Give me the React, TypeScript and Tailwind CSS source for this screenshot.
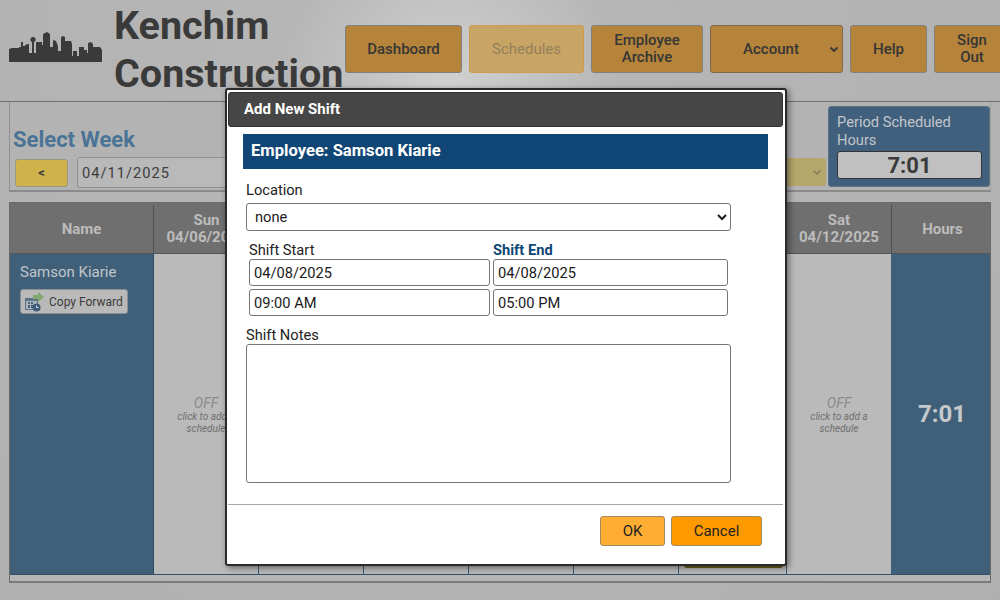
const fontRoboto = "font-['Roboto',sans-serif]";

function Skyline() {
  return (
    <svg width="93" height="30" viewBox="0 0 93 30" fill="#3a3a3a" className="shrink-0">
      <path d="M0 30V17L3 16H10V15H12V10H14V14H16V13L19 12H20V21H23V10H25V21H27V10H33V13H34V2L38 0L41 2V15H44V8L47 9L49 14V19H52V5L54 4L56 5V9H62L63 12V24H64V19H68V24H70V15H75V18H78V21H79V11L82 10L84 12V15H91L93 18V30Z" />
      <circle cx="24" cy="7.5" r="2.6" />
    </svg>
  );
}

function NavButton({ label, width, dim }: { label: string; width: string; dim?: boolean }) {
  return (
    <button
      className={`${width} h-12 shrink-0 rounded-[3px] border px-[14px] text-[15px] leading-[17px] ${
        dim
          ? "border-[#cf9c4e] bg-[#c9a565] font-normal text-[#93805a]"
          : "border-[#808080] bg-[#b5833a] font-medium text-[#363636]"
      }`}
    >
      {label}
    </button>
  );
}

function CopyIcon() {
  return (
    <svg width="20" height="20" viewBox="0 0 20 20" className="shrink-0">
      <rect x="1" y="6" width="13" height="12" fill="#5f7386" />
      <rect x="2" y="9" width="11" height="8" fill="#a9b6c0" />
      <path d="M4 10h2v2H4zM7 10h2v2H7zM4 13h2v3H4zM7 13h2v3H7z" fill="#4c6378" />
      <path d="M9 3h5V0l6 5-6 5V7H9z" fill="#7fa76f" />
      <circle cx="12.5" cy="15.5" r="4" fill="#3f5d78" />
      <path d="M12.5 13.5v2h2" stroke="#d6dde3" strokeWidth="1" fill="none" />
    </svg>
  );
}

function OffCell({ width, border }: { width: string; border: boolean }) {
  return (
    <div className={`${width} shrink-0 flex flex-col items-center justify-center bg-[#bababa] pt-[1px] text-center italic text-[#8a8a8a] ${border ? "border-r border-[#3d5a75]" : ""}`}>
      <span className="text-[14px] leading-[16px]">OFF</span>
      <span className="w-[76px] text-[10px] leading-[12px] text-[#6e6e6e]">click to add a schedule</span>
    </div>
  );
}

const dayCols = [
  { label: "Sun", date: "04/06/2025", width: "w-[105px]" },
  { label: "Mon", date: "04/07/2025", width: "w-[105px]" },
  { label: "Tue", date: "04/08/2025", width: "w-[105px]" },
  { label: "Wed", date: "04/09/2025", width: "w-[105px]" },
  { label: "Thu", date: "04/10/2025", width: "w-[105px]" },
  { label: "Fri", date: "04/11/2025", width: "w-[108px]" },
  { label: "Sat", date: "04/12/2025", width: "w-[104px]" },
];

function ShiftModal() {
  const field = "h-[27px] rounded-[3px] border border-[#767676] bg-white px-1 text-[14.67px] text-[#1a1a1a] outline-none";
  return (
    <div className="absolute left-[225px] top-[88px] flex h-[478px] w-[562px] flex-col rounded-[3px] border-2 border-[#2a2a2a] bg-white pt-[2px] pl-[1px] pr-[2px] shadow-[2px_2px_6px_rgba(0,0,0,0.45)]">
      <div className="flex h-[35px] shrink-0 items-center rounded-[3px] border border-[#333] bg-[#464646] pl-[15px] text-[15px] font-bold text-white">
        Add New Shift
      </div>
      <div className="mx-[15px] mt-[7px] flex h-[35px] w-[525px] shrink-0 items-center bg-[#0f4676] pl-[8px] text-[16.6px] font-bold text-white">
        Employee: Samson Kiarie
      </div>
      <div className="ml-[18px] flex w-[485px] flex-col">
        <label className="mt-[12px] text-[14.67px] leading-[18px] text-[#222]">Location</label>
        <select className="mt-[4px] h-[28px] w-[485px] rounded-[3px] border border-[#767676] bg-white pl-[4px] text-[14.67px] text-[#1a1a1a]" defaultValue="none">
          <option value="none">none</option>
        </select>
        <div className="mt-[10px] ml-[3px] flex gap-[3px]">
          <div className="flex w-[241px] flex-col">
            <label className="text-[14.67px] leading-[18px] text-[#222]">Shift Start</label>
            <input readOnly value="04/08/2025" className={`${field} w-[241px]`} />
            <input readOnly value="09:00 AM" className={`${field} mt-[3px] w-[241px]`} />
          </div>
          <div className="flex w-[235px] flex-col">
            <label className="text-[14.67px] leading-[18px] font-bold text-[#0f4676]">Shift End</label>
            <input readOnly value="04/08/2025" className={`${field} w-[235px]`} />
            <input readOnly value="05:00 PM" className={`${field} mt-[3px] w-[235px]`} />
          </div>
        </div>
        <label className="mt-[10px] text-[14.67px] leading-[18px] text-[#222]">Shift Notes</label>
        <textarea readOnly className="h-[139px] w-[485px] resize-none rounded-[3px] border border-[#767676] bg-white outline-none" />
      </div>
      <div className="mt-[21px] border-t border-[#a8a8a8]" />
      <div className="mt-[11px] flex justify-end gap-[6px] pr-[21px]">
        <button className="h-[30px] w-[65px] rounded-[3px] border border-[#a08a60] bg-[#ffad33] text-[15px] text-[#222]">OK</button>
        <button className="h-[30px] w-[91px] rounded-[3px] border border-[#a08a60] bg-[#ff9900] text-[15px] text-[#222]">Cancel</button>
      </div>
    </div>
  );
}

export default function App() {
  return (
    <div className={`relative h-[600px] w-[1000px] overflow-hidden bg-[#b2b2b2] bg-[radial-gradient(circle_at_450px_85px,#d0d0d0_0,#b6b6b6_170px,#b0b0b0_100%)] ${fontRoboto}`}>
      {/* header */}
      <header className="flex h-[102px] items-start border-b border-[#6e6e6e]">
        <div className="ml-[9px] mt-[32px]">
          <Skyline />
        </div>
        <h1 className="ml-[12px] w-[231px] shrink-0 pt-[2px] text-[39.5px] leading-[48px] font-bold text-[#3a3a3a]">
          Kenchim Construction
        </h1>
        <nav className="mt-[25px] flex shrink-0 gap-[7px]">
          <NavButton label="Dashboard" width="w-[117px]" />
          <NavButton label="Schedules" width="w-[115px]" dim />
          <NavButton label="Employee Archive" width="w-[112px]" />
          <button className="relative h-12 w-[133px] shrink-0 rounded-[3px] border border-[#7d6a48] bg-[#b5833a] pr-[11px] text-[15px] font-medium text-[#363636]">
            Account
            <svg width="10" height="10" viewBox="0 0 10 10" className="absolute right-[3px] top-[18px]" fill="none" stroke="#363636" strokeWidth="1.8">
              <path d="M1.5 3.5 5 7l3.5-3.5" />
            </svg>
          </button>
          <NavButton label="Help" width="w-[77px]" />
          <NavButton label="Sign Out" width="w-[76px]" />
        </nav>
      </header>

      {/* week selector */}
      <section className="ml-[9px] flex h-[90px] w-[982px] items-end justify-between border-b-2 border-l border-r border-b-[#8a8a8a] border-l-[#8f8f8f] border-r-[#a0a0a0] bg-[#b3b3b3] pb-[3px] pl-[3px]">
        <div className="-mb-[1px] flex flex-col">
          <div className="text-[22px] leading-[26px] font-bold text-[#4a7396]">Select Week</div>
          <div className="mt-[4px] flex items-center gap-[9px] pl-[2px]">
            <button className="h-[28px] w-[53px] rounded-[3px] border border-[#9a9a80] bg-[#cfb24a] text-[13px] font-bold text-[#3a3a3a]">&lt;</button>
            <input readOnly value="04/11/2025" className="h-[31px] w-[200px] rounded-[3px] border border-[#8f8f8f] bg-[#b9b9b9] pl-[4px] text-[14.67px] tracking-[1px] text-[#3d3d3d] outline-none" />
          </div>
        </div>
        <div className="flex items-end gap-[2px]">
          <div className="mb-[1px] flex h-[28px] w-[60px] items-center justify-end rounded-[3px] bg-[#b5a66c] pr-[4px]">
            <svg width="10" height="10" viewBox="0 0 10 10" fill="none" stroke="#857a55" strokeWidth="1.5">
              <path d="M1.5 3.5 5 7l3.5-3.5" />
            </svg>
          </div>
          <div className="flex h-[81px] w-[162px] flex-col rounded-[3px] border border-[#5e7284] bg-[#41607d] px-[8px] pt-[6px] text-[#c1c6cb]">
            <div className="text-[14.67px] leading-[18px]">Period Scheduled Hours</div>
            <div className="mt-[2px] flex h-[28px] w-[145px] items-center justify-center rounded-[3px] border border-[#333] bg-[#c0c0c0] text-[22px] font-bold text-[#3a3a3a]">
              7:01
            </div>
          </div>
        </div>
      </section>

      {/* schedule grid */}
      <section className="ml-[9px] mt-[10px] flex h-[381px] w-[982px] flex-col border border-b-2 border-[#6a6a6a] border-b-[#7a7a7a] bg-[#b6b6b6]">
        <div className="flex h-[51px] shrink-0 border-b border-[#555] bg-[#6f6f6f] pt-[2px] text-center text-[15px] leading-[17px] font-bold text-[#bcbcbc]">
          <div className="flex w-[144px] shrink-0 items-center justify-center border-r border-[#505050]">Name</div>
          {dayCols.map((col) => (
            <div key={col.label} className={`${col.width} flex shrink-0 flex-col items-center justify-center`}>
              <span>{col.label}</span>
              <span>{col.date}</span>
            </div>
          ))}
          <div className="flex flex-1 items-center justify-center border-l border-[#505050] pl-[3px]">Hours</div>
        </div>
        <div className="relative flex h-[321px] shrink-0 border-b border-[#36506a]">
          <div className="w-[144px] shrink-0 border-r border-[#2d4a66] bg-[#40607a] pl-[10px] pt-[9px]">
            <div className="text-[15px] leading-[18px] text-[#c1c6cb]">Samson Kiarie</div>
            <button className="mt-[8px] flex h-[25px] w-[108px] items-center gap-[5px] rounded-[3px] border border-[#8a8f94] bg-[#b9b9b9] pl-[3px] text-[12px] text-[#3c3c3c]">
              <CopyIcon />
              Copy Forward
            </button>
          </div>
          {dayCols.map((col) => (
            <OffCell key={col.label} width={col.width} border={col.label !== "Sat"} />
          ))}
          <div className="flex flex-1 items-center justify-center bg-[#40607a] pb-[1px] pl-[3px] text-[24px] font-bold text-[#c6c9cc]">7:01</div>
          {/* Friday's shift tile, almost all of it behind the dialog */}
          <div className="absolute left-[674px] top-[280px] h-[34px] w-[99px] rounded-[3px] border-b-2 border-[#6b5d1e] bg-[#8f7d2c]" />
        </div>
      </section>

      <ShiftModal />
    </div>
  );
}
